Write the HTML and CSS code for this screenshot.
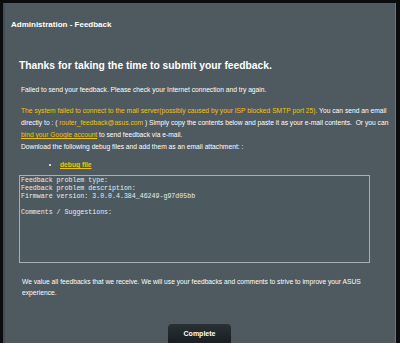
FILE: index.html
```html
<!DOCTYPE html>
<html lang="en">
<head>
  <meta charset="UTF-8">
  <title>Administration - Feedback</title>
  <link rel="stylesheet" href="styles.css">
</head>
<body>
  <div id="con">
    <div class="title">Administration - Feedback</div>

    <div class="content">
      <h2>Thanks for taking the time to submit your feedback.</h2>

      <p class="fail">Failed to send your feedback. Please check your Internet connection and try again.</p>

      <p class="info">
        <span class="warn">The system failed to connect to the mail server(possibly caused by your ISP blocked SMTP port 25).</span>
        You can send an email directly to : ( <a class="mail" href="#">router_feedback@asus.com</a> ) Simply copy the contents below and paste it as your e-mail contents.&nbsp; Or you can <a class="link" href="#">bind your Google account</a> to send feedback via e-mail.<br>
        Download the following debug files and add them as an email attachment: :
      </p>

      <ul class="files">
        <li><a class="link" href="#">debug file</a></li>
      </ul>

      <textarea class="report" readonly>Feedback problem type:
Feedback problem description:
Firmware version: 3.0.0.4.384_46249-g97d05bb

Comments / Suggestions:</textarea>

      <p class="thanks">We value all feedbacks that we receive. We will use your feedbacks and comments to strive to improve your ASUS experience.</p>

      <div class="actions">
        <button class="complete-btn">Complete</button>
      </div>
    </div>
  </div>
</body>
</html>
```

FILE: styles.css
```css
html, body {
    margin: 0;
    padding: 0;
    background-color: #0a0c0d;
    overflow: hidden;
}

body {
    font-family: 'Liberation Sans', Arial, sans-serif;
    color: #fff;
}

#con {
    margin: 3px 4px 0 3px;
    height: 360px;
    background-color: #4e5a60;
    border-left: 2px solid #444f55;
    border-right: 1px solid #6b767b;
}

.title {
    font-size: 8px;
    font-weight: bold;
    padding: 17px 0 0 6px;
    line-height: 9px;
}

.content {
    padding: 0 2px 0 14px;
}

.content h2 {
    font-size: 10.3px;
    margin: 31px 0 0 0;
    line-height: 12px;
}

.fail {
    font-size: 6.7px;
    line-height: 11px;
    margin: 12px 0 0 2px;
}

.info {
    font-size: 6.7px;
    line-height: 12px;
    margin: 10px 0 0 2px;
}

.warn {
    color: #f2c500;
}

.mail {
    color: #f2c500;
    text-decoration: none;
}

.link {
    color: #f2c500;
    text-decoration: underline;
}

.files {
    font-size: 6.7px;
    line-height: 11px;
    margin: 6px 0 0 0;
    padding-left: 41px;
}

.files .link {
    font-weight: bold;
}

.report {
    display: block;
    box-sizing: border-box;
    width: 351px;
    height: 88px;
    margin: 5px 0 0 0;
    padding: 1px 0 0 1px;
    background-color: #4c5a5f;
    border: 1px solid #a7afb2;
    color: #e8ecee;
    font-family: 'Liberation Mono', 'Courier New', monospace;
    font-size: 6.6px;
    line-height: 7.9px;
    resize: none;
    outline: none;
}

.thanks {
    font-size: 6.7px;
    line-height: 11px;
    margin: 13px 0 0 3px;
}

.actions {
    display: flex;
    justify-content: center;
    margin-top: 26px;
    padding-right: 13px;
}

.complete-btn {
    width: 63px;
    height: 22px;
    border: none;
    border-radius: 4px;
    background: linear-gradient(#283135, #161c1f);
    color: #fff;
    font-family: 'Liberation Sans', Arial, sans-serif;
    font-size: 7px;
    font-weight: bold;
    padding: 0 0 3px 0;
}
```
